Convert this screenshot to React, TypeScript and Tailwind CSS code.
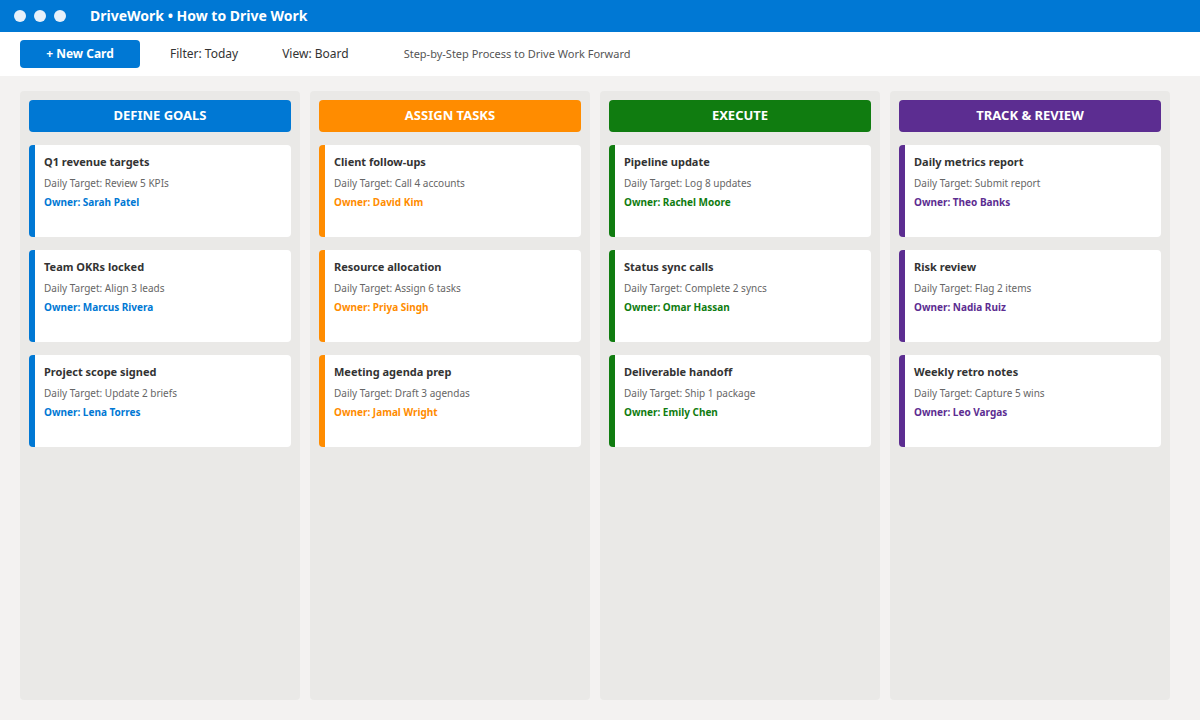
const columns = [
  {
    title: 'DEFINE GOALS',
    bg: 'bg-[#0078d4]',
    border: 'border-[#0078d4]',
    text: 'text-[#0078d4]',
    cards: [
      ['Q1 revenue targets', 'Review 5 KPIs', 'Sarah Patel'],
      ['Team OKRs locked', 'Align 3 leads', 'Marcus Rivera'],
      ['Project scope signed', 'Update 2 briefs', 'Lena Torres'],
    ],
  },
  {
    title: 'ASSIGN TASKS',
    bg: 'bg-[#ff8c00]',
    border: 'border-[#ff8c00]',
    text: 'text-[#ff8c00]',
    cards: [
      ['Client follow-ups', 'Call 4 accounts', 'David Kim'],
      ['Resource allocation', 'Assign 6 tasks', 'Priya Singh'],
      ['Meeting agenda prep', 'Draft 3 agendas', 'Jamal Wright'],
    ],
  },
  {
    title: 'EXECUTE',
    bg: 'bg-[#107c10]',
    border: 'border-[#107c10]',
    text: 'text-[#107c10]',
    cards: [
      ['Pipeline update', 'Log 8 updates', 'Rachel Moore'],
      ['Status sync calls', 'Complete 2 syncs', 'Omar Hassan'],
      ['Deliverable handoff', 'Ship 1 package', 'Emily Chen'],
    ],
  },
  {
    title: 'TRACK & REVIEW',
    bg: 'bg-[#5c2d91]',
    border: 'border-[#5c2d91]',
    text: 'text-[#5c2d91]',
    cards: [
      ['Daily metrics report', 'Submit report', 'Theo Banks'],
      ['Risk review', 'Flag 2 items', 'Nadia Ruiz'],
      ['Weekly retro notes', 'Capture 5 wins', 'Leo Vargas'],
    ],
  },
];

export default function App() {
  return (
    <div className="flex h-[720px] w-[1200px] flex-col bg-[#f3f2f1] font-['Liberation_Sans',Arial,sans-serif] text-[#333]">
      {/* title bar */}
      <div className="flex h-8 items-center bg-[#0078d4] px-[14px]">
        <div className="flex gap-2">
          <span className="size-3 rounded-full bg-[#e6f0fa]" />
          <span className="size-3 rounded-full bg-[#e6f0fa]" />
          <span className="size-3 rounded-full bg-[#e6f0fa]" />
        </div>
        <span className="ml-6 text-sm font-bold text-white">DriveWork • How to Drive Work</span>
      </div>

      {/* toolbar */}
      <div className="flex h-11 items-center bg-white px-5 text-xs">
        <button className="h-7 w-[120px] rounded bg-[#0078d4] font-bold text-white">+ New Card</button>
        <span className="ml-[30px]">Filter: Today</span>
        <span className="ml-[44px]">View: Board</span>
        <span className="ml-[55px] text-[11px] text-[#555]">Step-by-Step Process to Drive Work Forward</span>
      </div>

      {/* board */}
      <div className="flex flex-1 gap-[10px] px-5 pt-[15px] pb-5">
        {columns.map((col) => (
          <div key={col.title} className="flex w-[280px] flex-col gap-[13px] rounded bg-[#eae9e7] p-[9px]">
            <div className={`${col.bg} flex h-8 items-center justify-center rounded-sm text-[13px] font-bold text-white`}>
              {col.title}
            </div>
            {col.cards.map(([title, target, owner]) => (
              <div key={title} className={`h-[92px] rounded-sm border-l-[6px] bg-white pl-[9px] pt-[9px] ${col.border}`}>
                <div className="text-[11px] font-bold">{title}</div>
                <div className="mt-[5px] text-[10px] text-[#666]">Daily Target: {target}</div>
                <div className={`mt-[4px] text-[10px] font-bold ${col.text}`}>Owner: {owner}</div>
              </div>
            ))}
          </div>
        ))}
      </div>
    </div>
  );
}
